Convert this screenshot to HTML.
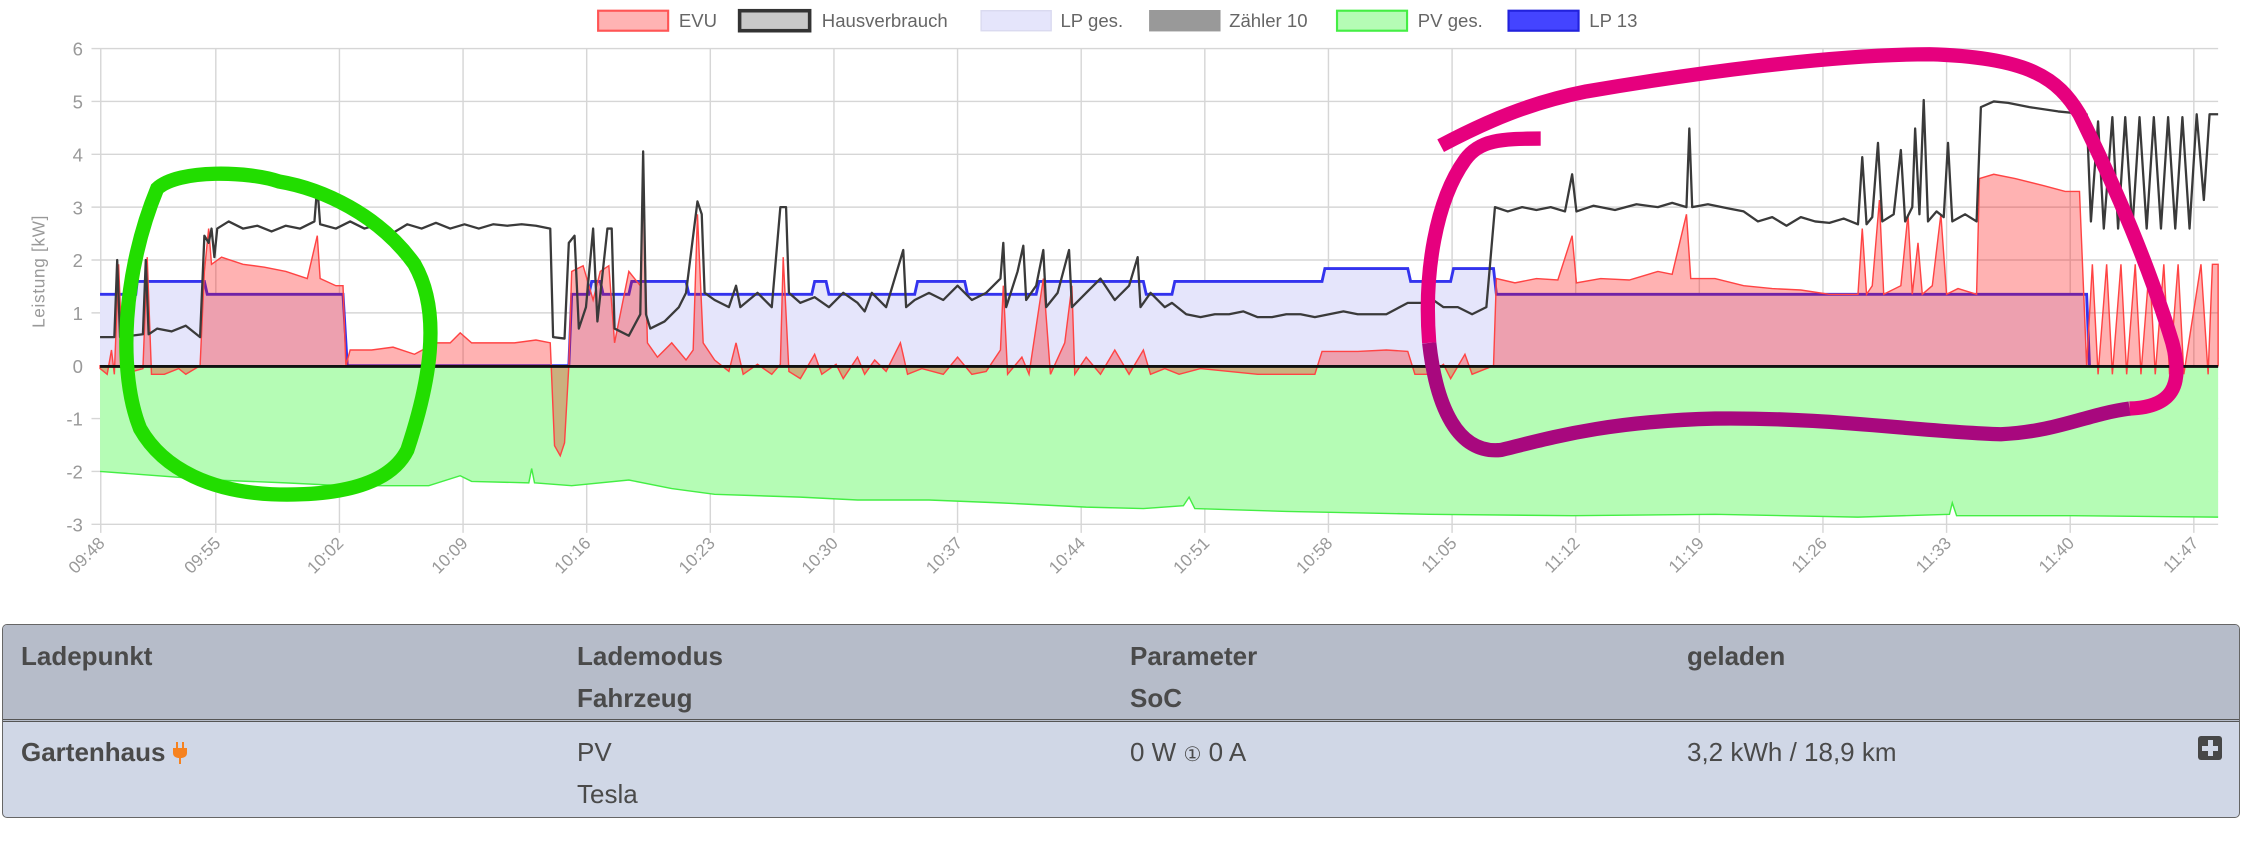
<!DOCTYPE html>
<html><head><meta charset="utf-8">
<style>
html,body{margin:0;padding:0;background:#fff;width:2241px;height:854px;overflow:hidden;font-family:"Liberation Sans",sans-serif;}
#chart{position:absolute;left:0;top:0;width:2241px;height:610px;}
.tbl{position:absolute;left:2px;top:624px;width:2236px;height:192px;border:1px solid #666;border-radius:5px;overflow:hidden;background:#d0d7e6;}
.hd{position:absolute;left:0;top:0;width:100%;height:94px;background:#b6bcc9;border-bottom:3px double #555;}
.t{position:absolute;font-size:26px;color:#4a4a4a;line-height:30px;white-space:nowrap;}
.b{font-weight:bold;}
</style></head><body>
<svg id="chart" viewBox="0 0 1568 427" preserveAspectRatio="none" xmlns="http://www.w3.org/2000/svg">
<g font-family="Liberation Sans, sans-serif">
<g font-size="13" fill="#666">
<rect x="418.5" y="7.5" width="49" height="14" fill="#ffb3b3" stroke="#ff5555" stroke-width="1.5"/><text x="475" y="19">EVU</text>
<rect x="517.5" y="7.5" width="49" height="14" fill="#c8c8c8" stroke="#333" stroke-width="2.5"/><text x="575" y="19">Hausverbrauch</text>
<rect x="686.5" y="7.5" width="49" height="14" fill="#e5e5fb" stroke="#dadaf0" stroke-width="1"/><text x="742" y="19">LP ges.</text>
<rect x="804.5" y="7.5" width="49" height="14" fill="#999" stroke="#999" stroke-width="1"/><text x="860" y="19">Zähler 10</text>
<rect x="935.5" y="7.5" width="49" height="14" fill="#b5fcb5" stroke="#44ee44" stroke-width="1.5"/><text x="992" y="19">PV ges.</text>
<rect x="1055.5" y="7.5" width="49" height="14" fill="#4444ff" stroke="#2222dd" stroke-width="1.5"/><text x="1112" y="19">LP 13</text>
</g>
<g stroke="#d6d6d6" stroke-width="1">
<line x1="64" y1="34" x2="1552" y2="34"/><line x1="64" y1="71" x2="1552" y2="71"/><line x1="64" y1="108" x2="1552" y2="108"/><line x1="64" y1="145" x2="1552" y2="145"/><line x1="64" y1="182" x2="1552" y2="182"/><line x1="64" y1="219" x2="1552" y2="219"/><line x1="64" y1="293" x2="1552" y2="293"/><line x1="64" y1="330" x2="1552" y2="330"/><line x1="64" y1="367" x2="1552" y2="367"/>
<line x1="70.5" y1="34" x2="70.5" y2="373"/><line x1="151" y1="34" x2="151" y2="373"/><line x1="237.5" y1="34" x2="237.5" y2="373"/><line x1="324" y1="34" x2="324" y2="373"/><line x1="410.5" y1="34" x2="410.5" y2="373"/><line x1="497" y1="34" x2="497" y2="373"/><line x1="583.5" y1="34" x2="583.5" y2="373"/><line x1="670" y1="34" x2="670" y2="373"/><line x1="756.5" y1="34" x2="756.5" y2="373"/><line x1="843" y1="34" x2="843" y2="373"/><line x1="929.5" y1="34" x2="929.5" y2="373"/><line x1="1016" y1="34" x2="1016" y2="373"/><line x1="1102.5" y1="34" x2="1102.5" y2="373"/><line x1="1189" y1="34" x2="1189" y2="373"/><line x1="1275.5" y1="34" x2="1275.5" y2="373"/><line x1="1362" y1="34" x2="1362" y2="373"/><line x1="1448.5" y1="34" x2="1448.5" y2="373"/><line x1="1535" y1="34" x2="1535" y2="373"/>
</g>
<g font-size="13" fill="#999" text-anchor="end">
<text x="58" y="39">6</text><text x="58" y="76">5</text><text x="58" y="113">4</text><text x="58" y="150">3</text><text x="58" y="187">2</text><text x="58" y="224">1</text><text x="58" y="261">0</text><text x="58" y="298">-1</text><text x="58" y="335">-2</text><text x="58" y="372">-3</text>
</g>
<text transform="translate(31,190) rotate(-90)" font-size="12" fill="#999" text-anchor="middle" letter-spacing="0.5">Leistung [kW]</text>
<g font-size="12" fill="#999" text-anchor="end">
<text transform="translate(74,381) rotate(-45)">09:48</text><text transform="translate(155,381) rotate(-45)">09:55</text><text transform="translate(241,381) rotate(-45)">10:02</text><text transform="translate(328,381) rotate(-45)">10:09</text><text transform="translate(414,381) rotate(-45)">10:16</text><text transform="translate(501,381) rotate(-45)">10:23</text><text transform="translate(587,381) rotate(-45)">10:30</text><text transform="translate(674,381) rotate(-45)">10:37</text><text transform="translate(760,381) rotate(-45)">10:44</text><text transform="translate(847,381) rotate(-45)">10:51</text><text transform="translate(933,381) rotate(-45)">10:58</text><text transform="translate(1020,381) rotate(-45)">11:05</text><text transform="translate(1106,381) rotate(-45)">11:12</text><text transform="translate(1193,381) rotate(-45)">11:19</text><text transform="translate(1279,381) rotate(-45)">11:26</text><text transform="translate(1366,381) rotate(-45)">11:33</text><text transform="translate(1452,381) rotate(-45)">11:40</text><text transform="translate(1539,381) rotate(-45)">11:47</text>
</g>
<path d="M70,256 L70,330 L150,336 L200,338 L240,340 L300,340 L322,333 L330,337 L370,338 L372,328 L374,338 L400,340 L440,336 L470,342 L500,346 L560,348 L600,350 L650,350 L700,352 L760,355 L800,356 L828,354 L832,348 L836,356 L900,358 L1000,360 L1100,361 L1200,360 L1300,362 L1364,360 L1366,352 L1369,361 L1450,361 L1552,362 L1552,256 Z" fill="#b5fcb5" stroke="none"/>
<polyline points="70,330 150,336 200,338 240,340 300,340 322,333 330,337 370,338 372,328 374,338 400,340 440,336 470,342 500,346 560,348 600,350 650,350 700,352 760,355 800,356 828,354 832,348 836,356 900,358 1000,360 1100,361 1200,360 1300,362 1364,360 1366,352 1369,361 1450,361 1552,362" fill="none" stroke="#44ee44" stroke-width="1"/>
<path d="M70,256 L70,206 95,206 96,197 143,197 145,206 240,206 243,256 398,256 400,206 412,206 414,197 420,197 422,206 440,206 442,197 480,197 482,206 568,206 570,197 578,197 580,206 640,206 642,197 675,197 677,206 725,206 727,197 800,197 802,206 820,206 822,197 925,197 927,188 985,188 987,197 1015,197 1017,188 1045,188 1047,206 1460,206 1462,256 Z" fill="#e5e5fb"/>
<polyline points="70,206 95,206 96,197 143,197 145,206 240,206 243,256 398,256 400,206 412,206 414,197 420,197 422,206 440,206 442,197 480,197 482,206 568,206 570,197 578,197 580,206 640,206 642,197 675,197 677,206 725,206 727,197 800,197 802,206 820,206 822,197 925,197 927,188 985,188 987,197 1015,197 1017,188 1045,188 1047,206 1460,206 1462,256" fill="none" stroke="#3333ee" stroke-width="2"/>
<path d="M70,256 L70,258 75,262 78,245 80,262 83,185 86,262 100,258 103,180 106,262 115,262 125,258 130,262 140,256 143,190 146,160 148,185 155,180 170,185 185,187 200,190 215,195 222,165 224,195 235,200 240,200 242,256 245,245 260,245 275,243 290,248 305,240 315,240 322,233 330,240 345,240 360,240 375,238 385,240 388,312 392,319 395,310 398,256 400,190 408,186 415,210 420,190 426,186 430,240 440,190 448,200 450,130 453,240 460,250 470,240 480,252 485,245 488,150 492,240 500,252 510,260 515,240 520,262 530,255 540,262 546,255 548,180 552,260 560,265 570,248 575,262 585,255 590,265 600,250 605,262 612,252 620,260 630,240 635,262 645,258 660,262 670,250 680,262 690,260 700,245 702,200 705,262 715,250 720,262 730,195 735,262 745,240 750,200 752,262 760,250 770,262 780,245 790,262 800,245 805,262 815,258 825,262 840,258 860,260 880,262 900,262 920,262 925,246 950,246 970,245 985,246 990,262 1000,262 1010,255 1015,265 1025,248 1030,262 1045,256 1047,195 1060,198 1075,195 1090,196 1100,165 1103,198 1120,195 1140,196 1160,190 1170,192 1180,150 1183,195 1200,195 1220,200 1240,202 1260,203 1280,206 1300,206 1303,160 1306,206 1310,200 1315,140 1318,206 1330,200 1335,150 1338,206 1342,170 1345,206 1352,200 1358,150 1362,206 1370,202 1383,206 1385,125 1395,122 1410,125 1430,130 1445,134 1455,134 1460,256 1464,185 1468,262 1474,185 1478,262 1484,185 1488,262 1494,185 1498,262 1504,185 1508,262 1514,185 1518,262 1524,185 1528,262 1540,185 1545,262 1548,185 1552,185 L1552,256 Z" fill="rgba(255,0,0,0.3)" stroke="#ff4444" stroke-width="1"/>
<polyline points="70,236 80,236 82,182 84,236 100,234 102,182 104,234 110,230 120,232 130,228 140,236 143,165 146,170 148,160 150,180 152,160 160,155 170,160 180,158 190,162 200,158 210,160 220,155 222,130 224,157 235,160 245,155 255,160 265,157 275,163 285,157 295,160 305,156 315,160 325,157 335,160 345,157 355,158 365,157 375,158 385,160 387,236 395,237 398,170 402,165 405,230 410,215 415,160 418,225 425,160 428,160 430,230 440,235 448,220 450,106 452,220 455,230 465,225 475,215 480,205 488,141 491,150 493,205 500,210 510,215 515,200 518,215 530,205 540,215 546,145 550,145 552,205 560,212 570,208 580,215 590,205 600,212 605,218 610,205 620,215 632,175 634,215 640,210 650,205 660,210 670,200 680,210 690,205 700,195 702,170 704,215 712,190 716,172 718,210 725,200 730,175 732,215 740,205 748,175 750,215 760,205 770,195 780,210 790,200 796,180 798,215 805,205 815,215 820,212 830,220 840,222 850,220 860,220 870,218 880,222 890,222 900,220 910,220 920,222 930,220 940,218 950,220 960,220 970,220 985,212 995,212 1000,208 1010,215 1020,215 1030,220 1040,215 1046,145 1055,148 1065,145 1075,147 1085,145 1095,148 1100,122 1103,148 1115,144 1130,147 1145,143 1160,145 1170,142 1180,145 1182,90 1184,145 1195,143 1210,146 1220,148 1230,155 1240,152 1250,158 1260,152 1270,155 1280,156 1290,153 1300,157 1303,110 1306,157 1310,152 1314,100 1317,155 1325,150 1330,105 1333,155 1338,145 1340,90 1343,150 1346,70 1349,155 1355,148 1360,152 1363,100 1366,155 1375,150 1383,155 1386,75 1395,71 1405,72 1420,75 1440,78 1460,80 1463,155 1468,85 1472,160 1478,82 1482,160 1487,82 1492,160 1497,82 1502,160 1507,82 1512,160 1517,82 1522,160 1527,82 1532,160 1537,80 1542,140 1546,80 1552,80" fill="none" stroke="#3a3a3a" stroke-width="1.6" stroke-linejoin="round"/>
<line x1="70" y1="256.5" x2="1552" y2="256.5" stroke="#111" stroke-width="2"/>
<path d="M110,132 C125,118 175,120 195,127 C225,132 265,150 290,185 C310,220 300,270 285,315 C270,345 220,347 190,346 C150,344 115,330 98,300 C82,260 86,190 110,132 Z" fill="none" stroke="#22dd00" stroke-width="10" stroke-linecap="round"/>
<path d="M1008,102 C1040,85 1070,72 1110,64 C1180,52 1280,38 1350,38 C1420,40 1440,55 1455,80 C1480,130 1505,190 1520,240 C1528,270 1520,285 1490,286" fill="none" stroke="#e6007e" stroke-width="10" stroke-linecap="butt"/>
<path d="M1490,286 C1460,290 1440,302 1400,304 C1340,302 1280,292 1200,293 C1120,295 1080,308 1050,315 C1020,318 1005,285 1000,240" fill="none" stroke="#a8087e" stroke-width="10"/>
<path d="M1000,240 C996,190 1005,140 1025,112 C1035,98 1050,97 1078,97" fill="none" stroke="#e6007e" stroke-width="10"/>
</g>
</svg>

<div class="tbl">
<div class="hd"></div>
<div class="t b" style="left:18px;top:16px">Ladepunkt</div>
<div class="t b" style="left:574px;top:16px">Lademodus</div>
<div class="t b" style="left:574px;top:58px">Fahrzeug</div>
<div class="t b" style="left:1127px;top:16px">Parameter</div>
<div class="t b" style="left:1127px;top:58px">SoC</div>
<div class="t b" style="left:1684px;top:16px">geladen</div>
<div class="t b" style="left:18px;top:112px">Gartenhaus <svg width="14" height="22" viewBox="0 0 14 22" style="vertical-align:-3px"><rect x="3" y="0" width="2" height="6" fill="#f6821f"/><rect x="9" y="0" width="2" height="6" fill="#f6821f"/><path d="M0,6 H14 V11 C14,15 10,16 8,16 V22 H6 V16 C4,16 0,15 0,11 Z" fill="#f6821f"/></svg></div>
<div class="t" style="left:574px;top:112px">PV</div>
<div class="t" style="left:574px;top:154px">Tesla</div>
<div class="t" style="left:1127px;top:112px">0 W <span style="font-size:20px">&#9312;</span> 0 A</div>
<div class="t" style="left:1684px;top:112px">3,2 kWh / 18,9 km</div>
<div style="position:absolute;left:2195px;top:111px;width:24px;height:24px;background:#474747;border-radius:3px;">
<div style="position:absolute;left:10px;top:4px;width:5px;height:16px;background:#d0d7e6"></div>
<div style="position:absolute;left:4px;top:10px;width:16px;height:5px;background:#d0d7e6"></div>
</div>
</div>
</body></html>
